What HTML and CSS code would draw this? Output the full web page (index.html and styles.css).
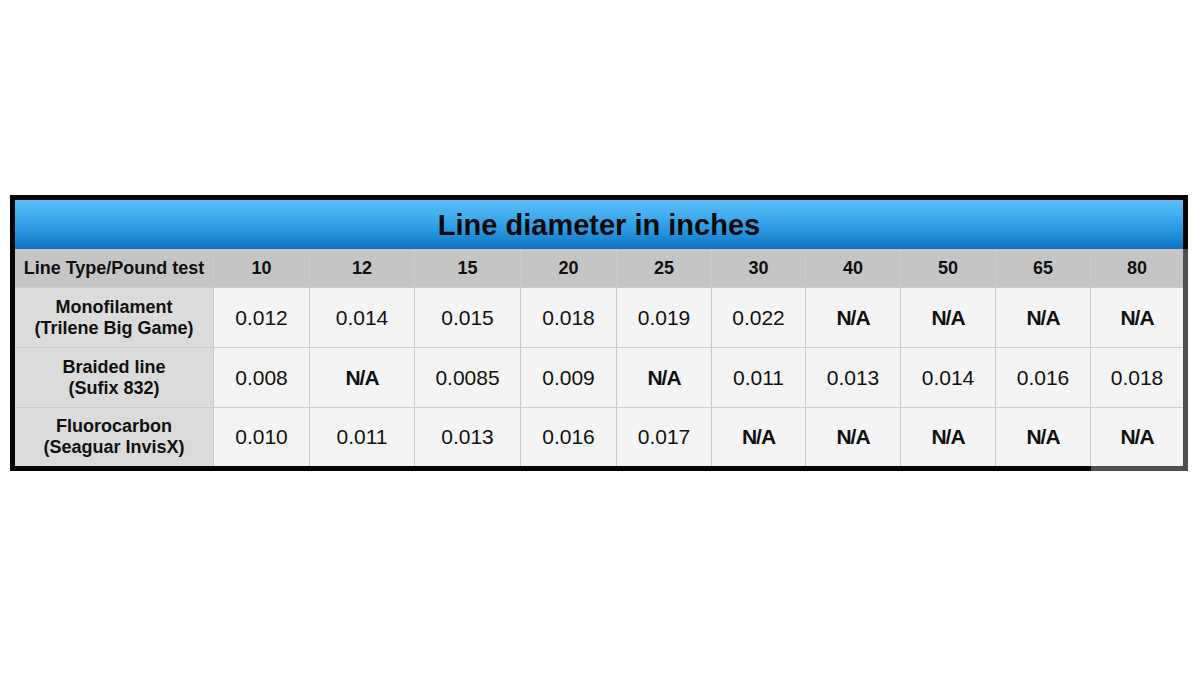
FILE: index.html
```html
<!DOCTYPE html>
<html>
<head>
<meta charset="utf-8">
<link rel="stylesheet" href="styles.css">
</head>
<body>
<div class="chart">
  <div class="title">Line diameter in inches</div>
  <div class="grid">
    <div class="hd first">Line Type/Pound test</div>
    <div class="hd">10</div><div class="hd">12</div><div class="hd">15</div><div class="hd">20</div><div class="hd">25</div>
    <div class="hd">30</div><div class="hd">40</div><div class="hd">50</div><div class="hd">65</div><div class="hd">80</div>

    <div class="rh">Monofilament<br>(Trilene Big Game)</div>
    <div class="c">0.012</div><div class="c">0.014</div><div class="c">0.015</div><div class="c">0.018</div><div class="c">0.019</div>
    <div class="c">0.022</div><div class="c na">N/A</div><div class="c na">N/A</div><div class="c na">N/A</div><div class="c na">N/A</div>

    <div class="rh">Braided line<br>(Sufix 832)</div>
    <div class="c">0.008</div><div class="c na">N/A</div><div class="c">0.0085</div><div class="c">0.009</div><div class="c na">N/A</div>
    <div class="c">0.011</div><div class="c">0.013</div><div class="c">0.014</div><div class="c">0.016</div><div class="c">0.018</div>

    <div class="rh">Fluorocarbon<br>(Seaguar InvisX)</div>
    <div class="c">0.010</div><div class="c">0.011</div><div class="c">0.013</div><div class="c">0.016</div><div class="c">0.017</div>
    <div class="c na">N/A</div><div class="c na">N/A</div><div class="c na">N/A</div><div class="c na">N/A</div><div class="c na">N/A</div>
  </div>
  <div class="bottom"><div class="bk"></div><div class="gr"></div></div>
</div>
</body>
</html>
```

FILE: styles.css
```css
html, body {
  margin: 0;
  padding: 0;
  background: #ffffff;
}
body {
  width: 1200px;
  height: 674px;
  font-family: "Liberation Sans", Arial, sans-serif;
  color: #111;
  padding-top: 195px;
  box-sizing: border-box;
}
.chart {
  margin-left: 10px;
  width: 1173px;
  border-top: 5px solid #050505;
  border-left: 5px solid #050505;
}
.title {
  height: 49px;
  border-right: 5px solid #050505;
  background: linear-gradient(#5bbef7 0%, #3fabee 35%, #2390dc 70%, #0d71bf 100%);
  display: flex;
  align-items: center;
  justify-content: center;
  font-weight: bold;
  font-size: 29px;
  color: #0a0a0a;
  padding-top: 2px;
  box-sizing: border-box;
}
.grid {
  display: grid;
  grid-template-columns: 198px 95px 104px 105px 95px 94px 93px 94px 94px 94px 92px;
  grid-template-rows: 38px 59px 59px 58px;
  column-gap: 1px;
  row-gap: 1px;
  background: #cbcbcb;
  border-right: 5px solid #4f4f4f;
}
.grid > div {
  display: flex;
  align-items: center;
  justify-content: center;
  text-align: center;
}
.hd {
  background: #c5c5c5;
  font-weight: bold;
  font-size: 18px;
}
.rh {
  background: #dbdbdb;
  font-weight: bold;
  font-size: 18px;
  line-height: 21px;
}
.c {
  background: #f4f4f4;
  font-size: 21px;
}
.c.na {
  font-weight: bold;
  letter-spacing: -1px;
}
.bottom {
  display: flex;
  height: 5px;
}
.bk {
  flex: 1;
  background: #050505;
}
.gr {
  width: 97px;
  background: #4f4f4f;
}
```
